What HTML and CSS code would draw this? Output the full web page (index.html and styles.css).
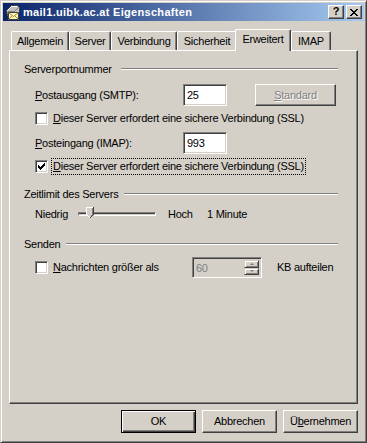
FILE: index.html
```html
<!DOCTYPE html>
<html lang="de">
<head>
<meta charset="utf-8">
<title>mail1.uibk.ac.at Eigenschaften</title>
<link rel="stylesheet" href="styles.css">
</head>
<body>
<div class="window">
  <div class="titlebar">
    <svg class="app-icon" width="16" height="16" viewBox="0 0 16 16">
      <path d="M1.5 6.5 L6.5 1.5 H12.5 L14.5 3.5 V7.5 L10.5 11.5 H2.5 Z" fill="#c0c0c0" stroke="#404040"/>
      <path d="M2.5 6.5 L6.5 2.5 H12" fill="none" stroke="#ffffff"/>
      <path d="M2.5 7.5 H9.5 L13.5 3.5" fill="none" stroke="#808080"/>
      <rect x="3.5" y="8.5" width="10" height="7" fill="#fff8b0" stroke="#404040"/>
      <path d="M3.5 8.5 L8.5 12.5 L13.5 8.5 M3.5 15.5 L7 12 M13.5 15.5 L10 12" fill="none" stroke="#a08040"/>
    </svg>
    <span class="title">mail1.uibk.ac.at Eigenschaften</span>
    <div class="cap-btns">
      <span class="cap cap-help">?</span>
      <span class="cap cap-close">
        <svg width="8" height="7" viewBox="0 0 8 7" shape-rendering="crispEdges">
          <rect x="0" y="0" width="2" height="1"/><rect x="6" y="0" width="2" height="1"/>
          <rect x="1" y="1" width="2" height="1"/><rect x="5" y="1" width="2" height="1"/>
          <rect x="2" y="2" width="4" height="1"/>
          <rect x="3" y="3" width="2" height="1"/>
          <rect x="2" y="4" width="4" height="1"/>
          <rect x="1" y="5" width="2" height="1"/><rect x="5" y="5" width="2" height="1"/>
          <rect x="0" y="6" width="2" height="1"/><rect x="6" y="6" width="2" height="1"/>
        </svg>
      </span>
    </div>
  </div>

  <div class="client">
    <div class="tabs">
      <div class="tab tab-allg">Allgemein</div>
      <div class="tab tab-server">Server</div>
      <div class="tab tab-verb">Verbindung</div>
      <div class="tab tab-sich">Sicherheit</div>
      <div class="tab tab-erw active">Erweitert</div>
      <div class="tab tab-imap">IMAP</div>
    </div>

    <div class="panel">
      <div class="group-head head-ports"><span class="group-title">Serverportnummer</span><i class="etch"></i></div>

      <div class="row row-port first-port">
        <span class="port-label"><u>P</u>ostausgang (SMTP):</span>
        <div class="edit">25</div>
        <div class="btn btn-standard disabled"><span><u>S</u>tandard</span></div>
      </div>

      <div class="row row-check check-1">
        <span class="checkbox"></span>
        <span class="check-label"><u>D</u>ieser Server erfordert eine sichere Verbindung (SSL)</span>
      </div>

      <div class="row row-port second-port">
        <span class="port-label"><u>P</u>osteingang (IMAP):</span>
        <div class="edit">993</div>
      </div>

      <div class="row row-check check-2">
        <span class="checkbox">
          <svg width="9" height="9" viewBox="0 0 9 9" shape-rendering="crispEdges">
            <rect x="7" y="1" width="1" height="1"/>
            <rect x="6" y="2" width="2" height="1"/>
            <rect x="1" y="3" width="1" height="1"/><rect x="5" y="3" width="3" height="1"/>
            <rect x="1" y="4" width="2" height="1"/><rect x="4" y="4" width="3" height="1"/>
            <rect x="1" y="5" width="5" height="1"/>
            <rect x="2" y="6" width="3" height="1"/>
            <rect x="3" y="7" width="1" height="1"/>
          </svg>
        </span>
        <span class="check-label focused"><u>D</u>ieser Server erfordert eine sichere Verbindung (SSL)</span>
      </div>

      <div class="group-head head-timeout"><span class="group-title">Zeitlimit des Servers</span><i class="etch"></i></div>

      <div class="row row-slider">
        <span class="sl-low">Niedrig</span>
        <div class="trackbar">
          <div class="track"></div>
          <svg class="thumb" width="8" height="12" viewBox="0 0 8 12" shape-rendering="crispEdges">
            <polygon points="0,0 8,0 8,8 4,12 0,8" fill="#d4d0c8"/>
            <rect x="0" y="0" width="7" height="1" fill="#ffffff"/>
            <rect x="0" y="0" width="1" height="8" fill="#ffffff"/>
            <rect x="7" y="0" width="1" height="8" fill="#404040"/>
            <rect x="6" y="1" width="1" height="7" fill="#808080"/>
            <rect x="6" y="8" width="1" height="1" fill="#404040"/>
            <rect x="5" y="9" width="1" height="1" fill="#404040"/>
            <rect x="4" y="10" width="1" height="1" fill="#404040"/>
            <rect x="5" y="8" width="1" height="1" fill="#808080"/>
            <rect x="1" y="8" width="1" height="1" fill="#ffffff"/>
            <rect x="2" y="9" width="1" height="1" fill="#ffffff"/>
            <rect x="3" y="10" width="1" height="1" fill="#ffffff"/>
          </svg>
        </div>
        <span class="sl-high">Hoch</span>
        <span class="sl-value">1 Minute</span>
      </div>

      <div class="group-head head-send"><span class="group-title">Senden</span><i class="etch"></i></div>

      <div class="row row-split">
        <span class="checkbox"></span>
        <span class="check-label split-label"><u>N</u>achrichten größer als</span>
        <div class="spinner">
          <span class="spin-value">60</span>
          <div class="spin-btns">
            <span class="spin-btn"><i class="arrow-up"></i></span>
            <span class="spin-btn"><i class="arrow-down"></i></span>
          </div>
        </div>
        <span class="kb-label">KB aufteilen</span>
      </div>
    </div>

    <div class="dlg-buttons">
      <div class="btn btn-dlg default"><span>OK</span></div>
      <div class="btn btn-dlg"><span>Abbrechen</span></div>
      <div class="btn btn-dlg"><span>Ü<u>b</u>ernehmen</span></div>
    </div>
  </div>
</div>
</body>
</html>
```
FILE: styles.css
```css
* { box-sizing: border-box; }

html, body {
  margin: 0;
  padding: 0;
  background: #d4d0c8;
}

body {
  font-family: "Liberation Sans", Arial, sans-serif;
  font-size: 11px;
  letter-spacing: -0.25px;
  line-height: 13px;
  color: #000;
}

u { text-decoration: underline; text-underline-offset: 1px; }

.window {
  width: 367px;
  height: 443px;
  background: #d4d0c8;
  border: 1px solid;
  border-color: #d4d0c8 #404040 #404040 #d4d0c8;
  box-shadow: inset 1px 1px 0 #ffffff, inset -1px -1px 0 #808080;
  padding: 2px;
  display: flex;
  flex-direction: column;
}

/* ---------- title bar ---------- */
.titlebar {
  height: 18px;
  flex: none;
  display: flex;
  align-items: center;
  padding: 0 2px 0 2px;
  background: linear-gradient(to right, #0a246a, #a6caf0);
  color: #fff;
}

.app-icon { flex: none; margin-right: 2px; }

.title {
  font-weight: bold;
  letter-spacing: 0.3px;
  flex: 1;
  white-space: nowrap;
}

.cap-btns { display: flex; gap: 2px; }

.cap {
  width: 16px;
  height: 14px;
  background: #d4d0c8;
  border: 1px solid;
  border-color: #ffffff #404040 #404040 #ffffff;
  box-shadow: inset -1px -1px 0 #808080;
  display: flex;
  align-items: center;
  justify-content: center;
  color: #000;
}

.cap-help {
  font-weight: bold;
  font-size: 11px;
  letter-spacing: 0;
  padding-bottom: 1px;
}

.cap-close svg { fill: #000; margin-left: -1px; }

/* ---------- client area ---------- */
.client {
  flex: 1;
  display: flex;
  flex-direction: column;
  padding: 8px 6px 0 6px;
}

.tabs {
  height: 21px;
  display: flex;
  align-items: flex-end;
  padding-left: 2px;
  flex: none;
}

.tab {
  height: 19px;
  background: #d4d0c8;
  border-top: 1px solid #ffffff;
  border-left: 1px solid #ffffff;
  border-right: 1px solid #404040;
  box-shadow: inset -1px 0 0 #808080;
  border-radius: 2px 2px 0 0;
  text-align: center;
  padding-top: 3px;
  white-space: nowrap;
}

.tab-allg { width: 58px; }
.tab-server { width: 42px; }
.tab-verb { width: 66px; }
.tab-sich { width: 60px; }
.tab-imap { width: 40px; }

.tab.active {
  width: 56px;
  height: 22px;
  margin-left: -2px;
  margin-bottom: -1px;
  position: relative;
  z-index: 1;
  padding-top: 3px;
}

.panel {
  height: 354px;
  flex: none;
  border: 1px solid;
  border-color: #ffffff #404040 #404040 #ffffff;
  box-shadow: inset -1px -1px 0 #808080;
  padding: 12px 19px 0 14px;
  display: flex;
  flex-direction: column;
}

/* group headers with etched line */
.group-head {
  height: 13px;
  display: flex;
  align-items: center;
}

.group-title { white-space: nowrap; }

.etch {
  flex: 1;
  height: 2px;
  margin-left: 6px;
  margin-top: -1px;
  border-top: 1px solid #808080;
  border-bottom: 1px solid #ffffff;
}

.head-ports .etch { margin-left: 9px; }
.head-timeout { margin-top: 13px; }
.head-send { margin-top: 16px; }

.row {
  display: flex;
  align-items: center;
  margin-left: 11px;
}

.row-port { height: 22px; }
.first-port { margin-top: 8px; }
.second-port { margin-top: 6px; }

.port-label { width: 148px; white-space: nowrap; }

.edit {
  width: 44px;
  height: 22px;
  background: #fff;
  border: 1px solid;
  border-color: #808080 #ffffff #ffffff #808080;
  box-shadow: inset 1px 1px 0 #404040, inset -1px -1px 0 #d4d0c8;
  padding: 4px 0 0 3px;
}

/* buttons */
.btn {
  background: #d4d0c8;
  border: 1px solid;
  border-color: #ffffff #404040 #404040 #ffffff;
  box-shadow: inset -1px -1px 0 #808080;
  display: flex;
  align-items: center;
  justify-content: center;
}

.btn-standard {
  width: 81px;
  height: 22px;
  margin-left: 28px;
}

.btn.disabled span {
  color: #808080;
  text-shadow: 1px 1px 0 #ffffff;
}

/* checkboxes */
.row-check { height: 15px; }
.check-1 { margin-top: 5px; }
.check-2 { margin-top: 4px; height: 17px; }

.checkbox {
  width: 13px;
  height: 13px;
  flex: none;
  background: #fff;
  border: 1px solid;
  border-color: #808080 #ffffff #ffffff #808080;
  box-shadow: inset 1px 1px 0 #404040, inset -1px -1px 0 #d4d0c8;
  padding: 1px;
  display: flex;
}

.checkbox svg { fill: #000; }

.check-label {
  margin-left: 3px;
  padding: 1px 1px;
  border: 1px solid transparent;
  white-space: nowrap;
}

.check-label.focused { border: 1px dotted #000; }

/* slider */
.row-slider { height: 16px; margin-top: 5px; }

.sl-low { width: 43px; }

.trackbar {
  width: 78px;
  height: 16px;
  display: flex;
  align-items: center;
  position: relative;
}

.track {
  width: 100%;
  height: 4px;
  border: 1px solid;
  border-color: #808080 #ffffff #ffffff #808080;
  background: linear-gradient(#404040 0 1px, #d4d0c8 1px);
}

.thumb {
  position: absolute;
  left: 8px;
  top: 1px;
}

.sl-high { margin-left: 12px; width: 39px; }

/* split row */
.row-split { height: 21px; margin-top: 6px; }

.split-label { width: 141px; }

.spinner {
  width: 70px;
  height: 21px;
  flex: none;
  display: flex;
  border: 1px solid;
  border-color: #808080 #ffffff #ffffff #808080;
  box-shadow: inset 1px 1px 0 #404040, inset -1px -1px 0 #d4d0c8;
  padding: 2px 2px 2px 2px;
  background: #d4d0c8;
}

.spin-value {
  flex: 1;
  color: #808080;
  padding: 2px 0 0 1px;
}

.spin-btns {
  width: 15px;
  display: flex;
  flex-direction: column;
}

.spin-btn {
  flex: 1;
  background: #d4d0c8;
  border: 1px solid;
  border-color: #d4d0c8 #404040 #404040 #d4d0c8;
  box-shadow: inset 1px 1px 0 #ffffff, inset -1px -1px 0 #808080;
  display: flex;
  align-items: center;
  justify-content: center;
}

.arrow-up, .arrow-down {
  width: 0;
  height: 0;
  border-left: 2px solid transparent;
  border-right: 2px solid transparent;
}
.arrow-up { border-bottom: 2px solid #808080; }
.arrow-down { border-top: 2px solid #808080; }

.kb-label { margin-left: 15px; white-space: nowrap; }

/* dialog buttons */
.dlg-buttons {
  display: flex;
  justify-content: flex-end;
  gap: 6px;
  margin-top: 6px;
}

.btn-dlg {
  width: 75px;
  height: 23px;
}

.btn-dlg.default {
  border: 1px solid #000;
  box-shadow: inset 1px 1px 0 #ffffff, inset -1px -1px 0 #404040, inset -2px -2px 0 #808080;
}
```
